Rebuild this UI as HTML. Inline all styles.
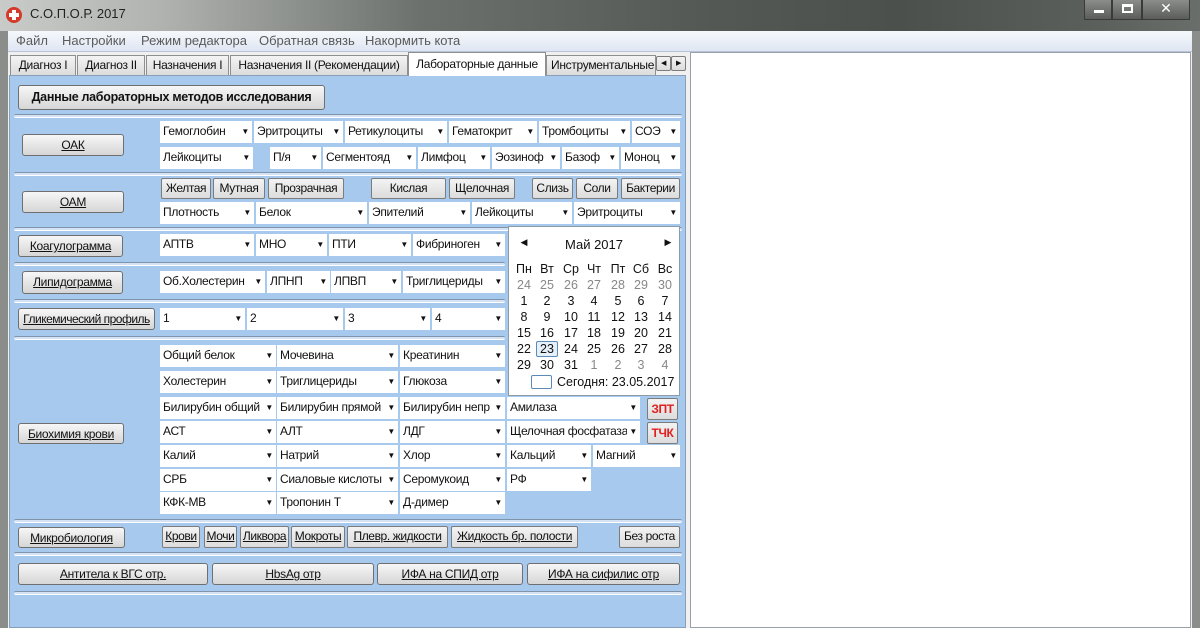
<!DOCTYPE html>
<html><head><meta charset="utf-8">
<style>
*{box-sizing:border-box;margin:0;padding:0}
body{width:1200px;height:628px;overflow:hidden;position:relative;background:#8a8d8a;font-family:"Liberation Sans","DejaVu Sans",sans-serif;font-size:12px;color:#111}
div{position:absolute}
.tb{left:0;top:0;width:1200px;height:31px;background:linear-gradient(90deg,#c9cbc9 0,#b0b3b0 160px,#6d716d 420px,#555955 700px,#4c504c 900px,#5c605c 1100px,#6a6e6a 1200px)}
.menu{left:8px;top:31px;width:1184px;height:21px;background:linear-gradient(#f6f8fc,#dfe6f3);border-bottom:1px solid #b9c3d6;color:#5a5a5a;font-size:13px}
.menu span{position:absolute;top:2px}
.tab{top:55px;height:20px;background:linear-gradient(#f4f4f4,#dcdcdc);border:1px solid #8e8f8f;border-bottom:none;text-align:center;line-height:18px;white-space:nowrap;overflow:hidden;letter-spacing:-0.3px}
.panel{left:9px;top:75px;width:677px;height:553px;background:#a8c9ee;border:1px solid #8a9fb8}
.c{background:#fff;height:22px;line-height:21px;padding-left:3px;white-space:nowrap;overflow:hidden;letter-spacing:-0.3px}
.c:after{content:"▼";position:absolute;right:3px;top:0;font-size:8px;background:#fff;padding-left:2px}
.b{background:linear-gradient(#f7f7f7,#e6e6e6 50%,#d6d6d6);border:1px solid #6f6f6f;border-radius:3px;text-align:center;line-height:20px;text-decoration:underline;white-space:nowrap;overflow:hidden;letter-spacing:-0.3px}
.s{background:linear-gradient(#f3f3f3,#dcdcdc);border:1px solid #7c7c7c;border-radius:2px;text-align:center;line-height:19px;white-space:nowrap;overflow:hidden;letter-spacing:-0.4px}
.sep{left:14px;width:668px;height:4px;border-top:1px solid #7f93ab;border-bottom:1px solid #fff;background:#d4e2f3;border-radius:2px}
.cal{left:508px;top:226px;width:172px;height:170px;background:#fff;border:1px solid #8d9aa8}
.cal span{position:absolute;width:22px;text-align:center;font-size:12.5px}
.g{color:#888}
</style></head><body>
<div class="tb">
 <div style="left:6px;top:7px;width:16px;height:16px;border-radius:50%;background:#d33a2a"></div>
 <div style="left:12px;top:10px;width:4px;height:10px;background:#fff"></div>
 <div style="left:9px;top:13px;width:10px;height:4px;background:#fff"></div>
 <div style="left:30px;top:6px;font-size:13px;color:#222">С.О.П.О.Р. 2017</div>
 <div style="left:1084px;top:0;width:28px;height:20px;border:1px solid #3a3a3a;border-top:none;background:linear-gradient(#8a8d8a,#5a5d5a)"><div style="left:9px;top:10px;width:10px;height:3px;background:#fff"></div></div>
 <div style="left:1112px;top:0;width:30px;height:20px;border:1px solid #3a3a3a;border-top:none;background:linear-gradient(#8a8d8a,#5a5d5a)"><div style="left:9px;top:4px;width:11px;height:9px;border:2px solid #fff;border-top-width:3px"></div></div>
 <div style="left:1142px;top:0;width:48px;height:20px;border:1px solid #3a3a3a;border-top:none;background:linear-gradient(#8a8d8a,#5a5d5a);color:#fff;font-weight:bold;font-size:14px;text-align:center;line-height:17px">✕</div>
</div>
<div class="menu"><span style="left:8px">Файл</span><span style="left:54px">Настройки</span><span style="left:133px">Режим редактора</span><span style="left:251px">Обратная связь</span><span style="left:357px">Накормить кота</span></div>
<div style="left:8px;top:52px;width:1184px;height:576px;background:#f0f0f0"></div>
<div style="left:690px;top:52px;width:501px;height:576px;background:#fff;border:1px solid #9aa0a8"></div>
<div class="tab" style="left:10px;width:66px">Диагноз I</div>
<div class="tab" style="left:77px;width:68px">Диагноз II</div>
<div class="tab" style="left:146px;width:83px">Назначения I</div>
<div class="tab" style="left:230px;width:178px">Назначения II (Рекомендации)</div>
<div class="tab" style="left:546px;width:110px;text-align:left;padding-left:4px">Инструментальные</div>
<div class="s" style="left:656px;top:56px;width:15px;height:15px;font-size:7px;line-height:13px">◀</div>
<div class="s" style="left:671px;top:56px;width:15px;height:15px;font-size:7px;line-height:13px">▶</div>
<div class="panel"></div>
<div class="tab" style="left:408px;top:52px;width:138px;height:24px;background:#fff;line-height:22px">Лабораторные данные</div>

<div class="b" style="left:18px;top:85px;width:307px;height:25px;font-weight:bold;text-decoration:none;line-height:23px;font-size:12.5px">Данные лабораторных методов исследования</div>
<div class="sep" style="top:114px"></div>

<div class="b" style="left:22px;top:134px;width:102px;height:22px">ОАК</div>
<div class="c" style="left:160px;top:121px;width:92px">Гемоглобин</div>
<div class="c" style="left:254px;top:121px;width:89px">Эритроциты</div>
<div class="c" style="left:345px;top:121px;width:102px">Ретикулоциты</div>
<div class="c" style="left:449px;top:121px;width:88px">Гематокрит</div>
<div class="c" style="left:539px;top:121px;width:91px">Тромбоциты</div>
<div class="c" style="left:632px;top:121px;width:48px">СОЭ</div>
<div class="c" style="left:160px;top:147px;width:93px">Лейкоциты</div>
<div class="c" style="left:270px;top:147px;width:51px">П/я</div>
<div class="c" style="left:323px;top:147px;width:93px">Сегментояд</div>
<div class="c" style="left:418px;top:147px;width:72px">Лимфоц</div>
<div class="c" style="left:492px;top:147px;width:68px">Эозиноф</div>
<div class="c" style="left:562px;top:147px;width:57px">Базоф</div>
<div class="c" style="left:621px;top:147px;width:59px">Моноц</div>
<div class="sep" style="top:172px"></div>

<div class="b" style="left:22px;top:191px;width:102px;height:22px">ОАМ</div>
<div class="s" style="left:161px;top:178px;width:50px;height:21px">Желтая</div>
<div class="s" style="left:213px;top:178px;width:52px;height:21px">Мутная</div>
<div class="s" style="left:268px;top:178px;width:76px;height:21px">Прозрачная</div>
<div class="s" style="left:371px;top:178px;width:75px;height:21px">Кислая</div>
<div class="s" style="left:449px;top:178px;width:66px;height:21px">Щелочная</div>
<div class="s" style="left:532px;top:178px;width:41px;height:21px">Слизь</div>
<div class="s" style="left:576px;top:178px;width:42px;height:21px">Соли</div>
<div class="s" style="left:621px;top:178px;width:59px;height:21px">Бактерии</div>
<div class="c" style="left:160px;top:202px;width:94px">Плотность</div>
<div class="c" style="left:256px;top:202px;width:111px">Белок</div>
<div class="c" style="left:369px;top:202px;width:101px">Эпителий</div>
<div class="c" style="left:472px;top:202px;width:100px">Лейкоциты</div>
<div class="c" style="left:574px;top:202px;width:106px">Эритроциты</div>
<div class="sep" style="top:227px"></div>

<div class="b" style="left:18px;top:235px;width:105px;height:22px">Коагулограмма</div>
<div class="c" style="left:160px;top:234px;width:94px">АПТВ</div>
<div class="c" style="left:256px;top:234px;width:71px">МНО</div>
<div class="c" style="left:329px;top:234px;width:82px">ПТИ</div>
<div class="c" style="left:413px;top:234px;width:92px">Фибриноген</div>
<div class="sep" style="top:262px;width:491px"></div>

<div class="b" style="left:22px;top:271px;width:101px;height:23px">Липидограмма</div>
<div class="c" style="left:160px;top:271px;width:105px">Об.Холестерин</div>
<div class="c" style="left:267px;top:271px;width:63px">ЛПНП</div>
<div class="c" style="left:331px;top:271px;width:70px">ЛПВП</div>
<div class="c" style="left:403px;top:271px;width:102px">Триглицериды</div>
<div class="sep" style="top:299px;width:491px"></div>

<div class="b" style="left:18px;top:308px;width:137px;height:22px;letter-spacing:-0.5px">Гликемический профиль</div>
<div class="c" style="left:160px;top:308px;width:85px">1</div>
<div class="c" style="left:247px;top:308px;width:96px">2</div>
<div class="c" style="left:345px;top:308px;width:85px">3</div>
<div class="c" style="left:432px;top:308px;width:73px">4</div>
<div class="sep" style="top:336px;width:491px"></div>

<div class="c" style="left:160px;top:345px;width:116px">Общий белок</div>
<div class="c" style="left:277px;top:345px;width:121px">Мочевина</div>
<div class="c" style="left:400px;top:345px;width:105px">Креатинин</div>
<div class="c" style="left:160px;top:371px;width:116px">Холестерин</div>
<div class="c" style="left:277px;top:371px;width:121px">Триглицериды</div>
<div class="c" style="left:400px;top:371px;width:105px">Глюкоза</div>
<div class="c" style="left:160px;top:397px;width:116px">Билирубин общий</div>
<div class="c" style="left:277px;top:397px;width:121px">Билирубин прямой</div>
<div class="c" style="left:400px;top:397px;width:105px">Билирубин непр</div>
<div class="c" style="left:507px;top:397px;width:133px">Амилаза</div>
<div class="s" style="left:647px;top:398px;width:31px;height:22px;color:#e02020;font-weight:bold;line-height:20px">ЗПТ</div>
<div class="b" style="left:18px;top:423px;width:106px;height:21px">Биохимия крови</div>
<div class="c" style="left:160px;top:421px;width:116px">АСТ</div>
<div class="c" style="left:277px;top:421px;width:121px">АЛТ</div>
<div class="c" style="left:400px;top:421px;width:105px">ЛДГ</div>
<div class="c" style="left:507px;top:421px;width:133px">Щелочная фосфатаза</div>
<div class="s" style="left:647px;top:422px;width:31px;height:22px;color:#e02020;font-weight:bold;line-height:20px">ТЧК</div>
<div class="c" style="left:160px;top:445px;width:116px">Калий</div>
<div class="c" style="left:277px;top:445px;width:121px">Натрий</div>
<div class="c" style="left:400px;top:445px;width:105px">Хлор</div>
<div class="c" style="left:507px;top:445px;width:84px">Кальций</div>
<div class="c" style="left:593px;top:445px;width:87px">Магний</div>
<div class="c" style="left:160px;top:469px;width:116px">СРБ</div>
<div class="c" style="left:277px;top:469px;width:121px">Сиаловые кислоты</div>
<div class="c" style="left:400px;top:469px;width:105px">Серомукоид</div>
<div class="c" style="left:507px;top:469px;width:84px">РФ</div>
<div class="c" style="left:160px;top:492px;width:116px">КФК-МВ</div>
<div class="c" style="left:277px;top:492px;width:121px">Тропонин Т</div>
<div class="c" style="left:400px;top:492px;width:105px">Д-димер</div>
<div class="sep" style="top:519px"></div>

<div class="b" style="left:18px;top:527px;width:107px;height:21px">Микробиология</div>
<div class="s" style="left:162px;top:526px;width:38px;height:22px;text-decoration:underline">Крови</div>
<div class="s" style="left:204px;top:526px;width:33px;height:22px;text-decoration:underline">Мочи</div>
<div class="s" style="left:240px;top:526px;width:49px;height:22px;text-decoration:underline">Ликвора</div>
<div class="s" style="left:291px;top:526px;width:54px;height:22px;text-decoration:underline">Мокроты</div>
<div class="s" style="left:347px;top:526px;width:101px;height:22px;text-decoration:underline">Плевр. жидкости</div>
<div class="s" style="left:451px;top:526px;width:127px;height:22px;text-decoration:underline">Жидкость бр. полости</div>
<div class="s" style="left:619px;top:526px;width:61px;height:22px">Без роста</div>
<div class="sep" style="top:552px"></div>

<div class="b" style="left:18px;top:563px;width:190px;height:22px">Антитела к ВГС отр.</div>
<div class="b" style="left:212px;top:563px;width:162px;height:22px">HbsAg отр</div>
<div class="b" style="left:377px;top:563px;width:146px;height:22px">ИФА на СПИД отр</div>
<div class="b" style="left:527px;top:563px;width:153px;height:22px">ИФА на сифилис отр</div>
<div class="sep" style="top:591px"></div>

<div class="cal">
 <span style="left:4px;top:10px;font-size:9px">◀</span>
 <span style="left:40px;top:10px;width:90px;font-size:13px">Май 2017</span>
 <span style="left:148px;top:10px;font-size:9px">▶</span>
 <span style="left:4px;top:35px">Пн</span><span style="left:27px;top:35px">Вт</span><span style="left:51px;top:35px">Ср</span><span style="left:74px;top:35px">Чт</span><span style="left:98px;top:35px">Пт</span><span style="left:121px;top:35px">Сб</span><span style="left:145px;top:35px">Вс</span>
 <span class="g" style="left:4px;top:51px">24</span><span class="g" style="left:27px;top:51px">25</span><span class="g" style="left:51px;top:51px">26</span><span class="g" style="left:74px;top:51px">27</span><span class="g" style="left:98px;top:51px">28</span><span class="g" style="left:121px;top:51px">29</span><span class="g" style="left:145px;top:51px">30</span>
 <span style="left:4px;top:67px">1</span><span style="left:27px;top:67px">2</span><span style="left:51px;top:67px">3</span><span style="left:74px;top:67px">4</span><span style="left:98px;top:67px">5</span><span style="left:121px;top:67px">6</span><span style="left:145px;top:67px">7</span>
 <span style="left:4px;top:83px">8</span><span style="left:27px;top:83px">9</span><span style="left:51px;top:83px">10</span><span style="left:74px;top:83px">11</span><span style="left:98px;top:83px">12</span><span style="left:121px;top:83px">13</span><span style="left:145px;top:83px">14</span>
 <span style="left:4px;top:99px">15</span><span style="left:27px;top:99px">16</span><span style="left:51px;top:99px">17</span><span style="left:74px;top:99px">18</span><span style="left:98px;top:99px">19</span><span style="left:121px;top:99px">20</span><span style="left:145px;top:99px">21</span>
 <span style="left:4px;top:115px">22</span><span style="left:27px;top:114px;border:1px solid #5a8ab8;border-radius:2px;background:#e6f0fa;height:16px">23</span><span style="left:51px;top:115px">24</span><span style="left:74px;top:115px">25</span><span style="left:98px;top:115px">26</span><span style="left:121px;top:115px">27</span><span style="left:145px;top:115px">28</span>
 <span style="left:4px;top:131px">29</span><span style="left:27px;top:131px">30</span><span style="left:51px;top:131px">31</span><span class="g" style="left:74px;top:131px">1</span><span class="g" style="left:98px;top:131px">2</span><span class="g" style="left:121px;top:131px">3</span><span class="g" style="left:145px;top:131px">4</span>
 <div style="left:22px;top:148px;width:21px;height:14px;border:1px solid #5a8ab8;border-radius:2px"></div>
 <span style="left:48px;top:148px;width:120px;text-align:left">Сегодня: 23.05.2017</span>
</div>
</body></html>
